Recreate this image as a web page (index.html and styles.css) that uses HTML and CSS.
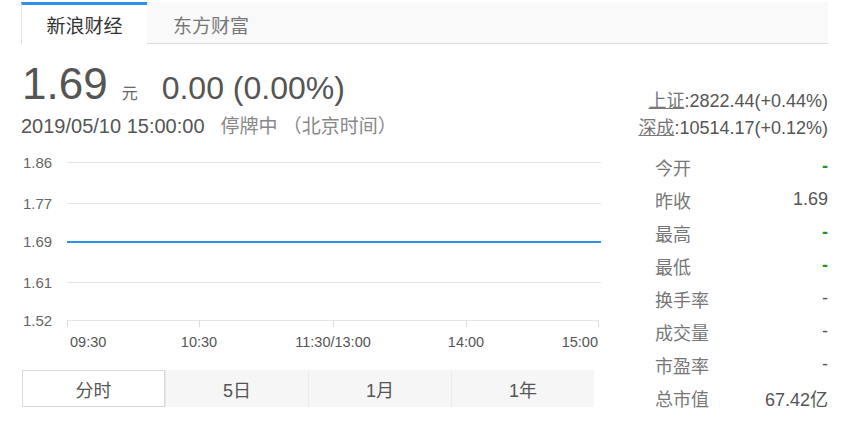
FILE: index.html
```html
<!DOCTYPE html>
<html lang="zh-CN">
<head>
<meta charset="utf-8">
<title>行情</title>
<link rel="stylesheet" href="styles.css">
</head>
<body>
<div class="wrap">
  <div class="tabs">
    <div class="tab active">新浪财经</div>
    <div class="tab">东方财富</div>
  </div>
  <div class="main">
    <div class="left">
      <div class="price-row">
        <span class="price">1.69</span><span class="unit">元</span><span class="change">0.00 (0.00%)</span>
      </div>
      <div class="time-row">
        <span class="time">2019/05/10 15:00:00</span><span class="status">停牌中 （北京时间）</span>
      </div>
      <svg class="chart" width="580" height="204" viewBox="0 0 580 204">
        <g class="grid">
          <line x1="46" y1="10.5" x2="580" y2="10.5"/>
          <line x1="46" y1="51.5" x2="580" y2="51.5"/>
          <line x1="46" y1="89.5" x2="580" y2="89.5"/>
          <line x1="46" y1="130.5" x2="580" y2="130.5"/>
          <line x1="46" y1="168.5" x2="578" y2="168.5"/>
          <line x1="46.5" y1="168" x2="46.5" y2="175"/>
          <line x1="178.5" y1="168" x2="178.5" y2="175"/>
          <line x1="312.5" y1="168" x2="312.5" y2="175"/>
          <line x1="445.5" y1="168" x2="445.5" y2="175"/>
          <line x1="577.5" y1="168" x2="577.5" y2="175"/>
        </g>
        <line class="price-line" x1="46" y1="90" x2="580" y2="90"/>
        <g class="ylab">
          <text x="2" y="15.5">1.86</text>
          <text x="2" y="56.5">1.77</text>
          <text x="2" y="95">1.69</text>
          <text x="2" y="135.5">1.61</text>
          <text x="2" y="174">1.52</text>
        </g>
        <g class="xlab">
          <text x="49" y="195">09:30</text>
          <text x="178" y="195" text-anchor="middle">10:30</text>
          <text x="312" y="195" text-anchor="middle">11:30/13:00</text>
          <text x="445" y="195" text-anchor="middle">14:00</text>
          <text x="577" y="195" text-anchor="end">15:00</text>
        </g>
      </svg>
      <div class="periods">
        <div class="period active">分时</div>
        <div class="period">5日</div>
        <div class="period">1月</div>
        <div class="period">1年</div>
      </div>
    </div>
    <div class="right">
      <div class="index"><span class="idx-name">上证</span>:2822.44(+0.44%)</div>
      <div class="index"><span class="idx-name">深成</span>:10514.17(+0.12%)</div>
      <div class="stats">
        <div class="stat"><span class="label">今开</span><span class="val green">-</span></div>
        <div class="stat"><span class="label">昨收</span><span class="val">1.69</span></div>
        <div class="stat"><span class="label">最高</span><span class="val green">-</span></div>
        <div class="stat"><span class="label">最低</span><span class="val green">-</span></div>
        <div class="stat"><span class="label">换手率</span><span class="val">-</span></div>
        <div class="stat"><span class="label">成交量</span><span class="val">-</span></div>
        <div class="stat"><span class="label">市盈率</span><span class="val">-</span></div>
        <div class="stat"><span class="label">总市值</span><span class="val">67.42亿</span></div>
      </div>
    </div>
  </div>
</div>
</body>
</html>
```
FILE: styles.css
```css
* { box-sizing: border-box; }
html, body { margin: 0; padding: 0; background: #fff; }
body {
  font-family: "Liberation Sans", Arial, "Noto Sans CJK SC", sans-serif;
  color: #555;
}
.wrap {
  width: 807px;
  margin-left: 21px;
  padding-top: 2px;
}
.tabs {
  display: flex;
  height: 42px;
  background: #f9f9f9;
  border-bottom: 1px solid #dcdcdc;
}
.tab {
  width: 128px;
  display: flex;
  align-items: center;
  justify-content: center;
  font-size: 19px;
  color: #777;
  padding-top: 3px;
}
.tab.active {
  width: 126px;
  background: #fff;
  color: #333;
  border-top: 3px solid #2f8ff0;
  border-left: 1px solid #e2e2e2;
  padding-top: 0;
  margin-bottom: -1px;
}
.main {
  display: flex;
}
.left {
  width: 580px;
}
.price-row {
  display: flex;
  align-items: baseline;
  height: 65px;
  padding-top: 15px;
}
.price {
  font-size: 44px;
  line-height: 50px;
  color: #555;
  margin-left: 1px;
}
.unit {
  font-size: 16px;
  color: #666;
  margin-left: 14px;
}
.change {
  font-size: 32px;
  color: #555;
  margin-left: 24px;
}
.time-row {
  display: flex;
  align-items: baseline;
  height: 32px;
  font-size: 20px;
  padding-top: 2px;
}
.time { color: #555; }
.status {
  margin-left: 16px;
  color: #888;
  font-size: 19px;
}
.chart {
  display: block;
  margin-top: 11px;
}
.grid line {
  stroke: #e6e6e6;
  stroke-width: 1;
}
.grid line:nth-child(n+6) {
  stroke: #dcdcdc;
}
.price-line {
  stroke: #2f8ff0;
  stroke-width: 2;
}
.ylab text {
  font-family: "Liberation Sans", Arial, sans-serif;
  font-size: 15px;
  fill: #666;
}
.xlab text {
  font-family: "Liberation Sans", Arial, sans-serif;
  font-size: 14.5px;
  fill: #555;
}
.periods {
  display: grid;
  grid-template-columns: repeat(4, 1fr);
  width: 572px;
  height: 37px;
  margin-left: 1px;
  margin-top: 14px;
  background: #f6f6f6;
}
.period {
  display: flex;
  align-items: center;
  justify-content: center;
  font-size: 18px;
  color: #555;
  border-left: 1px solid #ebebeb;
}
.period:first-child { border-left: 0; }
.period.active {
  background: #fff;
  border: 1px solid #d9d9d9;
}
.right {
  flex: 1;
  padding-top: 44px;
}
.index {
  text-align: right;
  font-size: 18px;
  line-height: 27px;
  color: #555;
}
.idx-name {
  color: #777;
  text-decoration: underline;
}
.stats {
  margin-top: 8px;
  padding-left: 54px;
}
.stat {
  display: flex;
  justify-content: space-between;
  align-items: center;
  height: 33px;
  font-size: 18px;
}
.label { color: #777; }
.val { color: #555; }
.val.green { color: #1a9a1a; font-weight: bold; }
```
